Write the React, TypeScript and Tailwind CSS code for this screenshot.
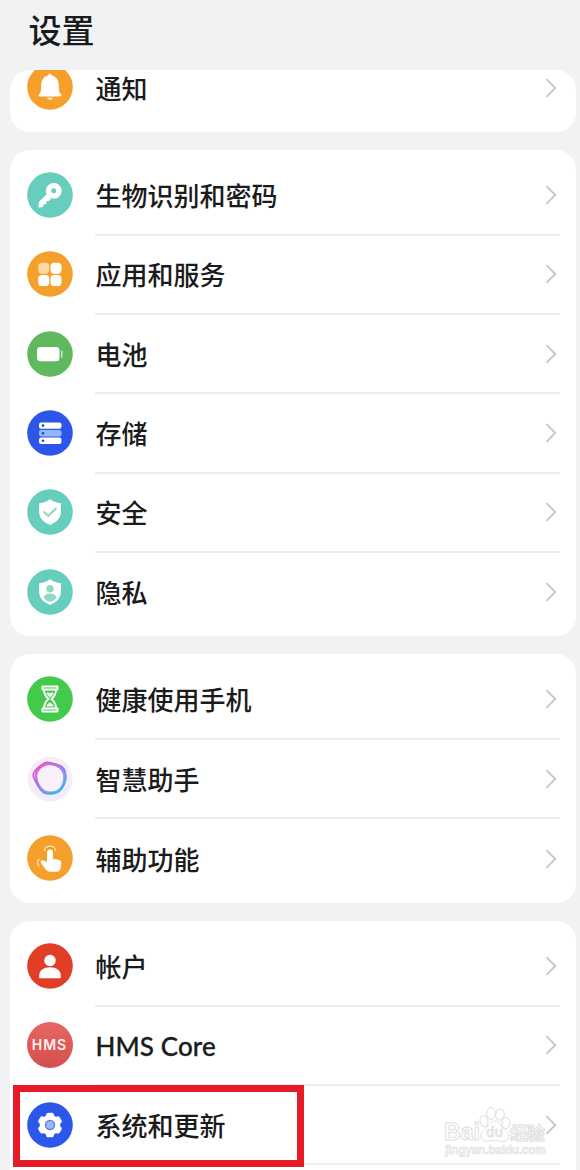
import type { ReactNode } from "react";

interface SettingItem {
  label: string;
  icon: ReactNode;
  latin?: boolean;
  highlighted?: boolean;
}

function Badge({ color, children }: { color: string; children: ReactNode }) {
  return (
    <svg viewBox="0 0 46 46" className="size-[46px] shrink-0">
      <circle cx="23" cy="23" r="22.8" fill={color} />
      {children}
    </svg>
  );
}

const bell = (
  <Badge color="#f6a02b">
    <path
      d="M23 9.800c1 0 1.700.7 1.800 1.600 4.300 1 6.700 4.300 6.900 8.600l.4 6.400c.1 1.700.7 2.700 1.700 3.600.9.8.6 2.500-.8 2.500H13c-1.400 0-1.700-1.700-.8-2.500 1-.9 1.600-1.900 1.700-3.600l.4-6.400c.2-4.300 2.600-7.600 6.900-8.600.1-.9.800-1.600 1.800-1.600Z"
      fill="#fff"
    />
    <path d="M19.800 33.800h6.400c-.5 1.300-1.700 2-3.200 2s-2.700-.7-3.200-2Z" fill="#ffe8c6" />
  </Badge>
);

const key = (
  <Badge color="#67cdbc">
    <path d="M22.500 22.800 13.800 31.500" stroke="#fff" strokeWidth="4.600" />
    <path d="m12.200 29.700-.9 4.500c-.1.900.4 1.400 1.300 1.300l3.400-.5.700-2.500 2.600-.4.300-2.800 2.800-.5 1.500-1.500-4.500-4.500Z" fill="#fff" />
    <circle cx="26.700" cy="18.800" r="5.200" fill="#67cdbc" stroke="#fff" strokeWidth="5.400" />
  </Badge>
);

const apps = (
  <Badge color="#f4a02c">
    <rect x="11.200" y="11.700" width="11" height="11" rx="3.600" fill="#ffd9a0" />
    <rect x="23.500" y="11.700" width="11" height="11" rx="3.600" fill="#fff" />
    <rect x="11.200" y="24" width="11" height="11" rx="3.600" fill="#fff" />
    <rect x="23.500" y="24" width="11" height="11" rx="3.600" fill="#fff" />
  </Badge>
);

const battery = (
  <Badge color="#61b95f">
    <rect x="10" y="16" width="22.500" height="14.200" rx="3.500" fill="#fff" />
    <path d="M34.800 20.200v6" stroke="#d5f0d3" strokeWidth="1.300" strokeLinecap="round" />
  </Badge>
);

const storage = (
  <Badge color="#2d56e8">
    <rect x="12" y="12.400" width="22.500" height="6.400" rx="2.200" fill="#fff" />
    <rect x="12" y="20" width="22.500" height="6.400" rx="2.200" fill="#91b9fb" />
    <rect x="12" y="27.600" width="22.500" height="6.400" rx="2.200" fill="#fff" />
    <g fill="#2446c4">
      <circle cx="16" cy="15.600" r="1.300" />
      <circle cx="16" cy="23.200" r="1.300" />
      <circle cx="16" cy="30.800" r="1.300" />
    </g>
  </Badge>
);

const shieldPath = "M23 10.300c3.300 2.300 6.500 3.500 10.900 4v8.400c0 6.200-4.100 10.400-10.900 13.200-6.800-2.800-10.900-7-10.900-13.200v-8.400c4.400-.5 7.600-1.700 10.900-4Z";

const security = (
  <Badge color="#67cdbc">
    <path d={shieldPath} fill="#fff" />
    <path d="m16.500 22.500 4.800 4.500 8.200-8.200" fill="none" stroke="#8fd4bd" strokeWidth="1.900" />
  </Badge>
);

const privacy = (
  <Badge color="#67cdbc">
    <path d={shieldPath} fill="#fff" />
    <circle cx="23" cy="19.800" r="3.700" fill="#8fd9c8" />
    <path d="M16.500 28.500c1-3 3.400-4 6.500-4s5.500 1 6.500 4c-1.500 2.300-3.400 3.700-6.500 4.300-3.100-.6-5-2-6.500-4.300Z" fill="#8fd9c8" />
  </Badge>
);

const hourglass = (
  <Badge color="#43c94b">
    <g fill="none" stroke="#fff" strokeWidth="1.900" strokeLinejoin="round">
      <path d="M15.500 10.500h15v3h-15zM15.500 32.500h15v3h-15z" />
      <path d="M17 13.500c0 5 1.500 7 4.600 9.500-3.100 2.500-4.600 4.500-4.600 9.500M29 13.500c0 5-1.500 7-4.600 9.500 3.100 2.500 4.600 4.500 4.600 9.500" />
    </g>
    <path d="M19.500 17c1.500-1 2.500.3 3.500.3s2-1.300 3.500-.3c-.5 2-1.700 3.200-3.500 4.500-1.800-1.300-3-2.500-3.500-4.500ZM23 26.500c2 1 3.300 2 3.800 4h-7.600c.5-2 1.800-3 3.800-4Z" fill="#fff" opacity=".9" />
  </Badge>
);

const assistant = (
  <svg viewBox="0 0 46 46" className="size-[46px] shrink-0">
    <defs>
      <linearGradient id="halo" x1="0" y1="0" x2=".6" y2="1">
        <stop offset="0" stopColor="#fdecf0" />
        <stop offset="1" stopColor="#edeefe" />
      </linearGradient>
      <linearGradient id="ring" x1=".15" y1=".1" x2=".8" y2=".9">
        <stop offset="0" stopColor="#dd50c4" />
        <stop offset=".5" stopColor="#9577ee" />
        <stop offset="1" stopColor="#45aaea" />
      </linearGradient>
    </defs>
    <circle cx="23" cy="23" r="22.500" fill="url(#halo)" />
    <g fill="none" stroke="url(#ring)">
      <path
        d="M18.500 6.500c3.500-1 6 1.300 10 1.700 5 .6 8.700 3.500 9.700 7.800.7 3.500 1.500 6-.2 10-1.500 4-3.500 8.500-7.500 10.300-4 1.500-8.500 2-12.500 1-3.500-1-5.500-5-7.500-8.300-2.500-4-4.700-7.500-4.300-10.500.5-4 8.300-10.500 12.300-12Z"
        fill="#f9f0fc"
        strokeWidth="1.500"
      />
      <path
        d="M19.500 8c4.500-.8 10 .5 14 3.500 3.500 3 4.700 8 4 13-.8 5.500-4.500 10.500-9.500 12-5.500 1.200-10.500.5-14-3.500-3-3.500-5.500-9.500-5-14.500C9.500 13.500 14.500 9 19.500 8Z"
        strokeWidth="3"
        opacity=".85"
      />
    </g>
  </svg>
);

const accessibility = (
  <Badge color="#f5a02c">
    <path
      d="M20 17.500a3 3 0 0 1 6 0v6.500l5.500.7c2 .3 3 1.500 2.800 3.500l-.7 4.800c-.4 2.500-1.700 3.700-4 3.700h-6.500c-1.800 0-3.200-.8-4.300-2.100l-4.800-6.500c-1.100-1.500.5-3.500 2.500-2.600l3.500 1.500Z"
      fill="#fff"
    />
    <path d="M17.200 15.500c.7-2.800 2.900-4.300 5.800-4.300s5.100 1.500 5.800 4.300M12 24.200c-2 1.700-2 4.600 0 6.700" fill="none" stroke="#ffe0b0" strokeWidth="1.300" strokeLinecap="round" />
  </Badge>
);

const account = (
  <Badge color="#e03e26">
    <circle cx="23" cy="17.500" r="5.700" fill="#fff" />
    <path d="M12.200 34.200v-1.700c0-5 4.500-8.200 10.800-8.200s10.800 3.200 10.800 8.200v1.700c0 .6-.4 1-1 1H13.200c-.6 0-1-.4-1-1Z" fill="#fff" />
  </Badge>
);

const hms = (
  <div className="flex size-[46px] shrink-0 items-center justify-center rounded-full bg-linear-to-b from-[#e76562] to-[#d4504f]">
    <span className="font-['Inter'] text-[14px] leading-none font-semibold tracking-[1px] text-[#fff1ef]">HMS</span>
  </div>
);

const system = (
  <Badge color="#2d56ea">
    <g fill="#fff">
      <circle cx="23" cy="23" r="10.300" />
      <rect x="19" y="10.700" width="8" height="24.600" rx="2.600" />
      <rect x="19" y="10.700" width="8" height="24.600" rx="2.600" transform="rotate(60 23 23)" />
      <rect x="19" y="10.700" width="8" height="24.600" rx="2.600" transform="rotate(120 23 23)" />
    </g>
    <circle cx="23" cy="23" r="4.500" fill="#9bbcf8" stroke="#5c80e4" strokeWidth="1.500" />
  </Badge>
);

const groups: SettingItem[][] = [
  [
    { label: "生物识别和密码", icon: key },
    { label: "应用和服务", icon: apps },
    { label: "电池", icon: battery },
    { label: "存储", icon: storage },
    { label: "安全", icon: security },
    { label: "隐私", icon: privacy },
  ],
  [
    { label: "健康使用手机", icon: hourglass },
    { label: "智慧助手", icon: assistant },
    { label: "辅助功能", icon: accessibility },
  ],
  [
    { label: "帐户", icon: account },
    { label: "HMS Core", icon: hms, latin: true },
    { label: "系统和更新", icon: system, highlighted: true },
  ],
];

function Row({ item, divider }: { item: SettingItem; divider: boolean }) {
  return (
    <div className="relative flex h-[79.33px] shrink-0 items-center pl-[16.500px]">
      {item.icon}
      <div className="mr-4 ml-[22px] flex h-full flex-1 flex-col">
        <div className="flex flex-1 items-center justify-between">
          {item.latin ? (
            <span className="mt-[3px] ml-px font-['Lato'] text-[26px] leading-none font-medium tracking-[0.1px] whitespace-nowrap text-[#1b1b1c] [-webkit-text-stroke:0.3px_#1b1b1c]">{item.label}</span>
          ) : (
            <span className="mt-[5px] ml-px text-[26px] leading-none font-medium whitespace-nowrap text-[#1b1b1c]">{item.label}</span>
          )}
          <svg viewBox="0 0 12 20" className="mt-px mr-[3px] h-5 w-3" fill="none" stroke="#c6c7c9" strokeWidth="1.900">
            <path d="m1.500 1.200 8.700 8.800-8.700 8.800" />
          </svg>
        </div>
        {divider && <div className="-mb-px h-0 border-b-2 border-[#ededee]" />}
      </div>
      {item.highlighted && (
        <>
          <Watermark />
          <div className="absolute top-0 left-[3px] h-[82px] w-[291px] border-[7.500px] border-[#e51c27]" />
        </>
      )}
    </div>
  );
}

function Watermark() {
  return (
    <svg viewBox="0 0 108 56" className="absolute top-[20px] left-[433px] h-14 w-[108px]" fill="#fff" stroke="#dedfe0" strokeWidth="1">
      <ellipse cx="41" cy="16" rx="4" ry="5.500" transform="rotate(-12 41 16)" />
      <ellipse cx="48" cy="8.500" rx="4.200" ry="6" />
      <ellipse cx="57" cy="9.500" rx="4.200" ry="5.700" transform="rotate(12 57 9.500)" />
      <ellipse cx="63" cy="18" rx="4.200" ry="5.500" />
      <path d="M51.500 16c4 0 5.500 3.500 8.500 7s6.500 5.500 5.500 9.500c-1 4-5 4.500-9 3.500-3.500-.8-6.500-.8-10 0-4 1-8-.5-8.500-4.500-.5-4 2.500-6 5-8.500s4.500-7 8.500-7Z" />
      <text x="1" y="35" fontSize="23" fontWeight="700" fontFamily="Liberation Sans, sans-serif" textLength="36">Bai</text>
      <text x="43" y="32" fontSize="14" fontWeight="700" fontFamily="Liberation Sans, sans-serif" textLength="17" fill="#e4e5e6" strokeWidth=".3">du</text>
      <text x="67" y="35" fontSize="18" fontWeight="700" fontFamily="Noto Sans CJK SC, sans-serif" textLength="35">经验</text>
      <text x="2" y="49" fontSize="12" fontWeight="700" fontFamily="Liberation Sans, sans-serif" fill="#f0f1f1" strokeWidth=".5" textLength="101">jingyan.baidu.com</text>
    </svg>
  );
}

export default function App() {
  return (
    <main className="flex h-[1170px] w-[580px] flex-col overflow-hidden bg-[#f1f2f4] pr-1 pl-[10px] font-['Roboto','Noto_Sans_CJK_SC',sans-serif]">
      <header className="flex h-[70px] shrink-0 items-start pt-[15px] pl-[18.500px]">
        <h1 className="text-[33px] leading-none font-medium text-[#1b1b1c]">设置</h1>
      </header>
      <section className="flex h-[62px] shrink-0 flex-col justify-end overflow-hidden rounded-[20px] bg-white pb-[5px]">
        <Row item={{ label: "通知", icon: bell }} divider={false} />
      </section>
      {groups.map((group, index) => (
        <section key={index} className="mt-[18px] flex shrink-0 flex-col rounded-[20px] bg-white py-[5.250px] last:rounded-b-none last:pb-10">
          {group.map((item, i) => (
            <Row key={item.label} item={item} divider={i < group.length - 1 || !!item.highlighted} />
          ))}
        </section>
      ))}
    </main>
  );
}
